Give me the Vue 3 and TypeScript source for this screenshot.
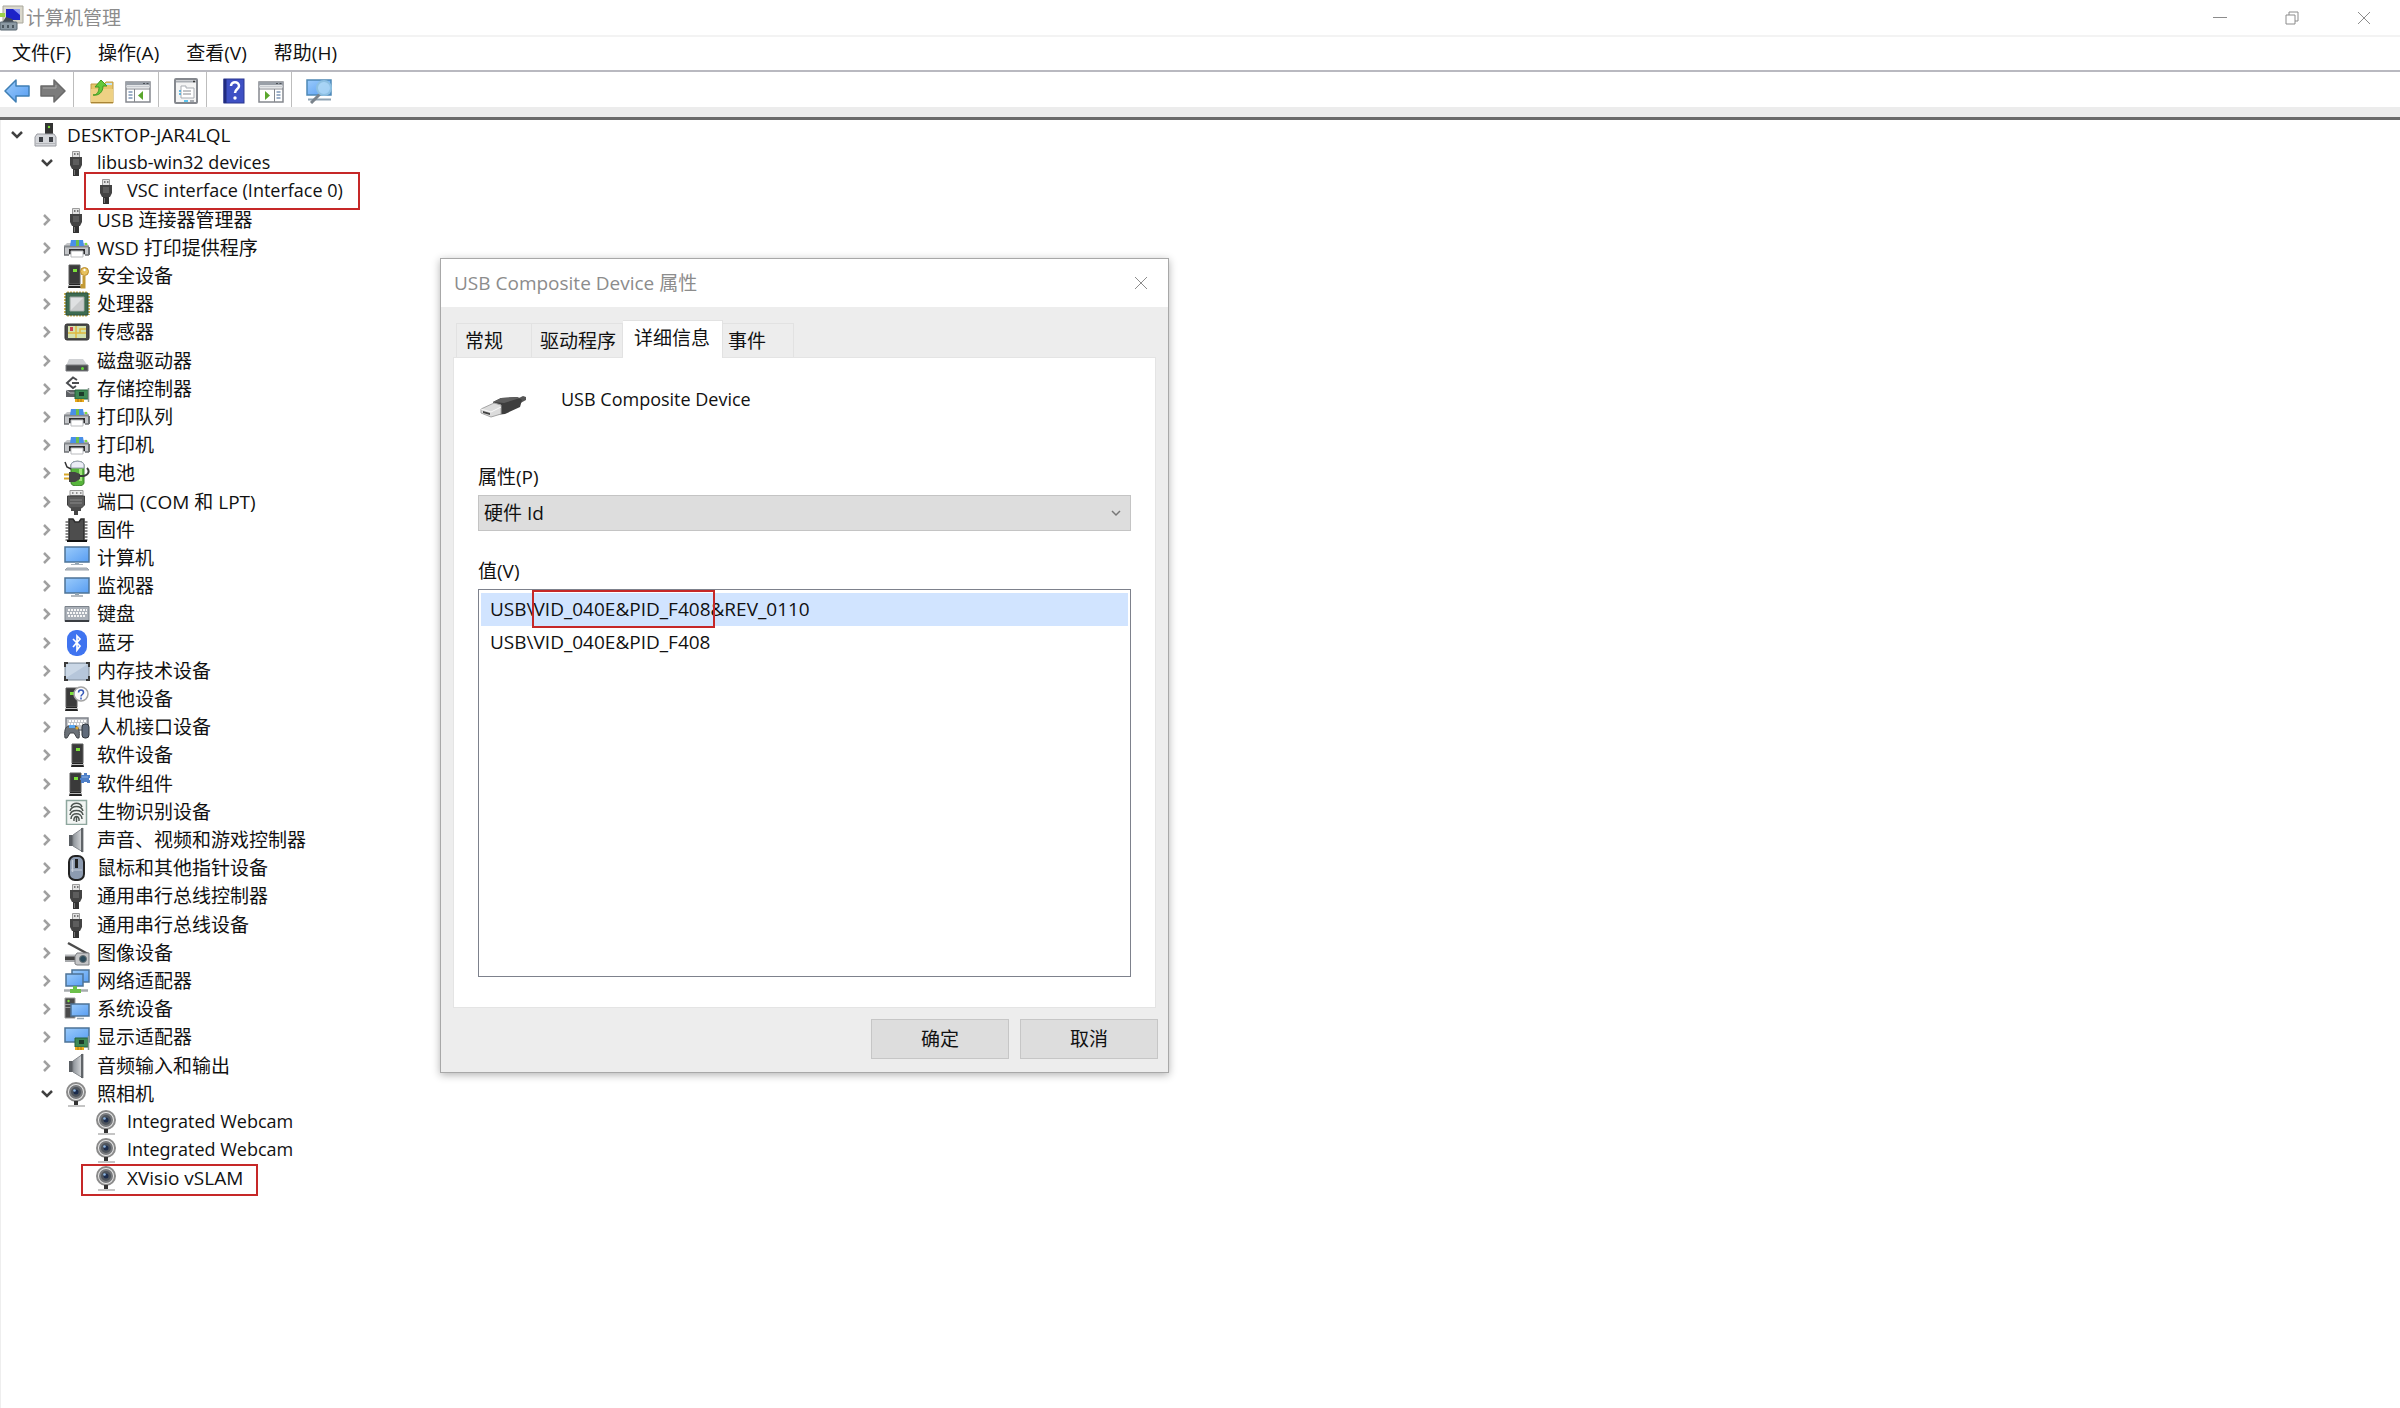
<script setup lang="ts">
import { ref } from 'vue'

interface TreeRow {
  label: string
  icon: string
  level: number
  state?: 'open' | 'closed'
  mark?: string
  compact?: boolean
}

const menus = ['文件(F)', '操作(A)', '查看(V)', '帮助(H)']

const toolGroups = [
  [
    { icon: 'back', name: '后退' },
    { icon: 'forward', name: '前进' },
  ],
  [
    { icon: 'folderUp', name: '上移' },
    { icon: 'paneLeft', name: '显示/隐藏控制台树' },
  ],
  [{ icon: 'properties', name: '属性' }],
  [
    { icon: 'help', name: '帮助' },
    { icon: 'paneRight', name: '显示/隐藏操作窗格' },
  ],
  [{ icon: 'scan', name: '扫描检测硬件改动' }],
]

const closed = (label: string, icon: string): TreeRow => ({ label, icon, level: 1, state: 'closed' })

const rows: TreeRow[] = [
  { label: 'DESKTOP-JAR4LQL', icon: 'host', level: 0, state: 'open' },
  { label: 'libusb-win32 devices', icon: 'usb', level: 1, state: 'open', compact: true },
  { label: 'VSC interface (Interface 0)', icon: 'usb', level: 2, mark: 'mark-vsc', compact: true },
  closed('USB 连接器管理器', 'usb'),
  closed('WSD 打印提供程序', 'printer'),
  closed('安全设备', 'security'),
  closed('处理器', 'cpu'),
  closed('传感器', 'sensor'),
  closed('磁盘驱动器', 'disk'),
  closed('存储控制器', 'storage'),
  closed('打印队列', 'printer'),
  closed('打印机', 'printer'),
  closed('电池', 'battery'),
  closed('端口 (COM 和 LPT)', 'port'),
  closed('固件', 'firmware'),
  closed('计算机', 'computer'),
  closed('监视器', 'monitor'),
  closed('键盘', 'keyboard'),
  closed('蓝牙', 'bluetooth'),
  closed('内存技术设备', 'memory'),
  closed('其他设备', 'other'),
  closed('人机接口设备', 'hid'),
  closed('软件设备', 'tower'),
  closed('软件组件', 'component'),
  closed('生物识别设备', 'finger'),
  closed('声音、视频和游戏控制器', 'speaker'),
  closed('鼠标和其他指针设备', 'mouse'),
  closed('通用串行总线控制器', 'usb'),
  closed('通用串行总线设备', 'usb'),
  closed('图像设备', 'scanner'),
  closed('网络适配器', 'network'),
  closed('系统设备', 'system'),
  closed('显示适配器', 'display'),
  closed('音频输入和输出', 'speaker'),
  { label: '照相机', icon: 'camera', level: 1, state: 'open' },
  { label: 'Integrated Webcam', icon: 'camera', level: 2, compact: true },
  { label: 'Integrated Webcam', icon: 'camera', level: 2, compact: true },
  { label: 'XVisio vSLAM', icon: 'camera', level: 2, mark: 'mark-slam' },
]

const tabs = ['常规', '驱动程序', '详细信息', '事件']
const activeTab = ref('详细信息')
const property = ref('硬件 Id')

const board =
  '<path d="M11 14h13v9H11z" fill="#3f8a56" stroke="#24613a"/><path d="M15 16h5v4h-5z" fill="#1c3b2a"/><path d="M24.500 12v14" stroke="#8d9a94" stroke-width="1.500"/><path d="M11 23h9v3h-9z" fill="#e8a91c"/><path d="M14 23v3M17 23v3" stroke="#a8740c"/>'
const screen = (x: number, y: number, w: number, hgt: number) =>
  `<rect x="${x}" y="${y}" width="${w}" height="${hgt}" fill="url(#g-blue)" stroke="#4d7396" stroke-width="1.500"/>`
const towerAt = (x: number) =>
  `<path d="M${x} 2h11v19H${x}z" fill="#3a3a3a" stroke="#5c5c5c"/><path d="M${x} 21h11l1 4H${x - 1}z" fill="#222"/><path d="M${x - 1} 22.500h13" stroke="#bbb"/><rect x="${x + 4}" y="6" width="4" height="3" fill="#7be03a"/>`
const pane = (mirror: boolean) =>
  `<rect x="1" y="4" width="24" height="20" fill="#fff" stroke="#85888e" stroke-width="1.500"/><path d="M1 4h24v3H1z" fill="#9aa0a8"/><path d="M18 5.500h2M21.500 5.500h2" stroke="#4c5157"/><path d="M1 8.500h24" stroke="#c9ccd1" stroke-width="2"/><path d="M1 11h24" stroke="#85888e"/>` +
  (mirror
    ? '<path d="M16.500 11v13" stroke="#85888e"/><path d="M18.500 14h4M18.500 17h4M18.500 20h4" stroke="#7d97b8" stroke-width="1.500"/><path d="M7 13l5 4.500-5 4.500z" fill="#5aa62c"/>'
    : '<path d="M9.500 11v13" stroke="#85888e"/><path d="M3.500 14h4M3.500 17h4M3.500 20h4" stroke="#7d97b8" stroke-width="1.500"/><path d="M18 13l-5 4.500 5 4.500z" fill="#5aa62c"/>')

const icons: Record<string, string> = {
  app: '<path d="M3 1h20v17H3z" fill="#d9d7cb" stroke="#a9a79b"/><path d="M6 4h14v11H6z" fill="#1c22c8"/><path d="M13 4h7v6z" fill="#8b96f2"/><path d="M0 8h5v4H0z" fill="#9bd24a"/><path d="M2 18l4-6 6 2 3 5z" fill="#444b52"/><rect x="0" y="17" width="17" height="8" rx="1" fill="#8b99a3" stroke="#55626c"/><path d="M3 20v3M8 20v3M13 20v3" stroke="#39434b" stroke-width="1.500"/>',
  back: '<path d="M1 13L12 2v6h13v10H12v6z" fill="url(#g-blue)" stroke="#3f7fb5" stroke-width="1.500" stroke-linejoin="round"/>',
  forward: '<path d="M25 13L14 2v6H1v10h13v6z" fill="#7c7c7c" stroke="#6a6a6a" stroke-width="1.500" stroke-linejoin="round"/><path d="M3 10h13V7" fill="none" stroke="#a8a8a8"/>',
  folderUp: '<path d="M3 6h13l2-2h7v21H3z" fill="#e6c46a" stroke="#c09c42"/><path d="M3 11h22v14H3z" fill="#eed184"/><path d="M3 24.500h22" stroke="#a98435"/><path d="M18 5h6v2h-6z" fill="#bfe3f5"/><path d="M5 17c4 0 6-3 6-8H7l6-7 6 6h-4c0 6-4 10-10 9z" fill="#63c93a" stroke="#3f9a22"/>',
  paneLeft: pane(false),
  paneRight: pane(true),
  properties: '<rect x="2" y="1" width="22" height="24" rx="1" fill="#f4f4f4" stroke="#85888e" stroke-width="2"/><path d="M3 3.500h20" stroke="#a9adb3" stroke-width="2"/><path d="M20 3.500h2" stroke="#333" stroke-width="1.500"/><path d="M8 8h5v2h8v10H8z" fill="#fff" stroke="#a9adb3"/><path d="M10 13h8M10 16h8" stroke="#85888e"/><path d="M6 13h2M6 16h2" stroke="#3aa6dd" stroke-width="1.500"/><path d="M11 23h4" stroke="#5cc4ee" stroke-width="2"/><path d="M17 23h4" stroke="#a9adb3" stroke-width="2"/>',
  help: '<rect x="3" y="1" width="20" height="24" fill="#3e50c4" stroke="#2a3690"/><path d="M4 1v24" stroke="#212b80" stroke-width="3"/><path d="M10 8c0-5 8-5 8 0 0 3-4 3-4 7" fill="none" stroke="#fff" stroke-width="2.500"/><circle cx="14" cy="20" r="1.700" fill="#fff"/>',
  scan: '<rect x="1" y="2" width="24" height="15" fill="url(#g-blue)" stroke="#4d88b5" stroke-width="1.500"/><path d="M2 21.500h23" stroke="#8fa3b3" stroke-width="2"/><path d="M14 16l-9 9" stroke="#7a838b" stroke-width="3"/><circle cx="18" cy="10" r="7" fill="#b4dcf5" fill-opacity=".8" stroke="#8dc0e2" stroke-width="2"/>',
  host: '<path d="M11 1h8v12h-8z" fill="#333"/><circle cx="15" cy="5" r="1.200" fill="#7be03a"/><path d="M3 12h17l2 3v9H1v-9z" fill="#d4d6da" stroke="#9a9ca2"/><path d="M5 15h4v5H5zM15 15h4v5h-4z" fill="#3d4046"/><path d="M1 21.500h21" stroke="#b5b7bb"/>',
  usb: '<path d="M8.500 1.500h7v6h-7z" fill="#e2e2e2" stroke="#9b9b9b"/><path d="M10 4h1.500M13 4h1.500" stroke="#555" stroke-width="1.500"/><path d="M6 7h12v8l-2 4H8l-2-4z" fill="#434343"/><path d="M9 9h6v6H9z" fill="#5d5d5d"/><path d="M9 19h6v7H9z" fill="#333"/><path d="M10.500 20v5" stroke="#777"/>',
  printer: '<path d="M3 8h20l2 3v9H0v-9z" fill="#c3c5c8"/><path d="M0 11.500h25" stroke="#85888c" stroke-width="2"/><path d="M7 5h12l1 6H6z" fill="#4a8fe8"/><path d="M12 5h3v6h-3z" fill="#6cc04a"/><path d="M5 14h16v5H5z" fill="#2e2e30"/><path d="M7 16h12v6H7z" fill="#fff" stroke="#b9bbbe"/><circle cx="22" cy="9" r="1.200" fill="#7be03a"/><path d="M0 12v8M25 12v8" stroke="#6f7276" stroke-width="2"/><path d="M0 20h5M21 20h4" stroke="#6f7276" stroke-width="1.500"/>',
  security: `${towerAt(5)}<path d="M20 13v11h-2v-3" fill="none" stroke="#c39a35" stroke-width="3"/><circle cx="20.500" cy="8.500" r="4" fill="#e7c15e" stroke="#b8892a"/><circle cx="20.500" cy="7" r="1.200" fill="#fff"/>`,
  cpu: '<path d="M3 1.500h21M3 24.500h21M1 2v22M25 2v22" stroke="#d2b457" stroke-width="2" stroke-dasharray="2 1"/><path d="M2 2h22v22H2z" fill="#3d6b50" stroke="#2b5140"/><path d="M6 6h14v14H6z" fill="#dfe1e2" stroke="#9aa39e"/><path d="M7 19L19 7v12z" fill="#c9cbcc"/>',
  sensor: '<rect x="1" y="5" width="24" height="16" rx="2" fill="#4b4b4b" stroke="#333"/><path d="M4 7h18v12H4z" fill="#d4e2ae"/><path d="M12 7v12M4 14h18M16 14v-4h6" stroke="#e0b93f" stroke-width="1.500" fill="none"/><path d="M6 8h3v4H6z" fill="#c8404e"/>',
  disk: '<path d="M5 11h14l5 7H2z" fill="#cfd1d4"/><path d="M2 17h22v6H2z" fill="#4a4c4f" stroke="#7b7d80"/><circle cx="18.500" cy="20.500" r="1.500" fill="#63d63a"/>',
  storage: '<path d="M13 4L9 1.500 3 7l6 5 3-2M8 7h7" fill="none" stroke="#4b4d50" stroke-width="2"/><path d="M2 14h10v7H2z" fill="#5d6064"/><path d="M2 14l4 3h6" stroke="#b9bbbe" fill="none"/>' + board,
  battery: '<path d="M7 5c0-5 13-5 13 0v18c0 4-13 4-13 0z" fill="#58b53c" stroke="#3b7c2b"/><path d="M7 5c0-5 13-5 13 0v3H7z" fill="#eceef5" stroke="#9a9db5"/><path d="M15 9h3v12h-3z" fill="#9fe27a"/><path d="M1 2l2 5 4 2" fill="none" stroke="#333" stroke-width="1.500"/><path d="M0 14.500h6M0 18.500h6" stroke="#d9a82a" stroke-width="2"/><path d="M5 12h6l5 2v5l-5 3H5z" fill="#444"/><path d="M15 16c10 1 11-5 8-8" fill="none" stroke="#3b3b3b" stroke-width="2"/>',
  port: '<path d="M6 1.500h13v5H6z" fill="#ececec" stroke="#9b9b9b"/><path d="M8 4h1.500M12 4h1.500M16 4h1.500" stroke="#777" stroke-width="1.500"/><path d="M3.500 7h17v9l-3 3h-11l-3-3z" fill="#5b5b5b" stroke="#3d3d3d"/><path d="M6 11h12M6 14h12" stroke="#8a8a8a"/><path d="M7 19h10v3H7z" fill="#4a4a4a"/><path d="M10 21h4v5h-4z" fill="#444"/>',
  firmware: '<path d="M3 4v20M22 4v20" stroke="#8d8d8d" stroke-width="3" stroke-dasharray="2 1"/><path d="M5 2h4l2 3h4l2-3h3v22H5z" fill="#4d4d4d" stroke="#2c2c2c" stroke-width="1.500"/><path d="M3 24h20" stroke="#111" stroke-width="2"/>',
  computer: screen(1, 2, 24, 15) + '<path d="M11 17h4v2h-4z" fill="#8fa3b3"/><path d="M7 19.500h12" stroke="#a5b1bb"/><path d="M3 23h20l2 2H1z" fill="#b9c0c8" stroke="#9aa2aa"/>',
  monitor: screen(1, 5, 24, 15) + '<path d="M11 20h4v2h-4z" fill="#8fa3b3"/><path d="M7 23h12" stroke="#9aa2aa" stroke-width="1.500"/>',
  keyboard: '<path d="M1 5.500h24v15H1z" fill="#aab0b8" stroke="#7b828a"/><path d="M4 9h19M3 12h20M4 15h18" stroke="#f6f6f6" stroke-width="2" stroke-dasharray="2 1"/><path d="M1 19h24v2H1z" fill="#3a3d42"/>',
  bluetooth: '<rect x="3" y="0" width="20" height="26" rx="9" fill="#3f74f0"/><path d="M9 9l7 7-3 4V6l3 3-7 8" fill="none" stroke="#fff" stroke-width="1.700"/>',
  memory: '<rect x="1" y="5" width="24" height="17" rx="1" fill="#b6c6da" stroke="#7f8b98"/><path d="M2 6h22L2 20z" fill="#cad7e6"/><path d="M1 9V5h3M22 5h3v4M1 18v4h3M22 22h3v-4" fill="none" stroke="#3b3b3b" stroke-width="2"/>',
  other: `${towerAt(2)}<circle cx="17" cy="8" r="7" fill="#fbfbfb" stroke="#a3a3a3" stroke-width="1.500"/><path d="M14.500 6.500c0-3.500 5-3.500 5 0 0 2-2.500 2-2.500 4" fill="none" stroke="#3558b8" stroke-width="1.500"/><path d="M17 11.500v2" stroke="#3558b8" stroke-width="1.500"/>`,
  hid: '<path d="M2 4h22v12H2z" fill="#c4c7cb" stroke="#7f838a" stroke-width="1.500"/><path d="M5 7h17M4 10h18" stroke="#fff" stroke-width="2" stroke-dasharray="2 1"/><path d="M1 24c-1-6 0-12 4-12h6c4 0 5 6 4 12h-2l-3-5H6l-3 5z" fill="#6b7178" stroke="#42464b"/><path d="M5 11h6v3H5z" fill="#5aa7f0"/><circle cx="13" cy="14" r="1.500" fill="#e0a82a"/><rect x="18" y="10" width="7" height="14" rx="3" fill="#5f6a7a" stroke="#2f343b"/>',
  tower: towerAt(8),
  component: towerAt(6) + '<path d="M17 4h3V2h3v2h3v3h-1v2h1v3h-3v-1h-3v1h-3V9h-1V7h1z" fill="#4f80c8"/><path d="M18 6h6" stroke="#8fb4e8"/>',
  finger: '<path d="M2.500 1.500h20v24h-20z" fill="#f2f5f3" stroke="#8ea79e" stroke-width="1.500"/><path d="M7 8c2-5 9-5 11 0M6 12c2-6 11-6 13 0M6 16c1-6 12-6 13 0M7 20c0-7 11-7 11 0M10 22c-1-6 6-6 5 0M12.500 18v5" fill="none" stroke="#4c5450" stroke-width="1.500"/>',
  speaker: '<path d="M5 8h5v11H5z" fill="#5a5e63"/><path d="M9 8l10-7v24L9 19z" fill="url(#g-gray)" stroke="#85898e"/><path d="M18 1v24" stroke="#606468" stroke-width="2"/>',
  mouse: '<rect x="5" y="1" width="15" height="24" rx="6" fill="#8d9bb0" stroke="#222" stroke-width="2"/><path d="M7 15h11" stroke="#c4ccd8"/><path d="M8.500 5v12" stroke="#c4ccd8" stroke-width="1.500"/><path d="M12.500 4v9" stroke="#222" stroke-width="3"/>',
  scanner: '<path d="M4 3l20 11" stroke="#4c4c4c" stroke-width="2.500"/><path d="M1 16h13v4H1z" fill="#444"/><path d="M1 15.500h12" stroke="#b5b7ba" stroke-width="2"/><path d="M1 21h14" stroke="#a7a9ac" stroke-width="2"/><path d="M13 13h12v12H13l-2-1v-8z" fill="#c4c5c7" stroke="#7b7d80"/><circle cx="19" cy="19" r="3.500" fill="#2d4c5c" stroke="#6b7478"/>',
  network: screen(8, 2, 17, 12) + screen(2, 6, 17, 12) + '<path d="M0 22.500h24" stroke="#a7abae" stroke-width="2.500"/><path d="M9 18h4v3h4v4H6v-4h3z" fill="#6cc04a"/>',
  system: '<path d="M1 2h10v20H1z" fill="#4b4b4b" stroke="#999"/><path d="M1 8.500h9M1 11.500h9" stroke="#999"/><circle cx="4.500" cy="5" r="1.200" fill="#7be03a"/>' + screen(7, 8, 18, 12) + '<path d="M13 22.500h7" stroke="#9aa8b3" stroke-width="1.500"/>',
  display: screen(1, 4, 24, 14) + board,
  camera: '<circle cx="12" cy="11" r="9" fill="#e8e8e8" stroke="#8b8b8b" stroke-width="2"/><circle cx="12" cy="11" r="6" fill="#4e545c" stroke="#77797c" stroke-width="2"/><circle cx="12" cy="11" r="2.500" fill="#1c2c4c"/><circle cx="10.500" cy="9.500" r="1.300" fill="#8cb4e0"/><path d="M10 20h4v4h-4z" fill="#333"/><path d="M4 25h17" stroke="#8b8b8b"/>',
}
</script>

<template>
  <div class="window">
    <svg class="defs" width="0" height="0" aria-hidden="true">
      <defs>
        <linearGradient id="g-blue" x1="0" y1="0" x2="1" y2="1">
          <stop offset="0" stop-color="#9acbfb" />
          <stop offset="1" stop-color="#589df2" />
        </linearGradient>
        <linearGradient id="g-gray">
          <stop offset="0" stop-color="#8d9298" />
          <stop offset="1" stop-color="#dfe1e3" />
        </linearGradient>
      </defs>
    </svg>

    <header class="titlebar">
      <svg class="icon" viewBox="0 0 26 26" v-html="icons.app" />
      <h1>计算机管理</h1>
      <div class="controls">
        <button type="button" aria-label="最小化">
          <svg viewBox="0 0 14 14"><path d="M0 6.500h14" /></svg>
        </button>
        <button type="button" aria-label="还原">
          <svg viewBox="0 0 14 14"><path d="M1 4h9v9H1zM4 4V1h9v9h-3" /></svg>
        </button>
        <button type="button" aria-label="关闭">
          <svg viewBox="0 0 14 14"><path d="M1 1l12 12M13 1L1 13" /></svg>
        </button>
      </div>
    </header>

    <nav class="menubar">
      <button v-for="m in menus" :key="m" type="button">{{ m }}</button>
    </nav>

    <div class="toolbar" role="toolbar">
      <div v-for="(group, i) in toolGroups" :key="i" class="tool-group">
        <button v-for="tool in group" :key="tool.icon" type="button" :aria-label="tool.name">
          <svg class="icon" viewBox="0 0 26 26" v-html="icons[tool.icon]" />
        </button>
      </div>
    </div>
    <div class="band"></div>

    <main class="content">
      <ul class="tree" role="tree">
        <li
          v-for="(row, i) in rows"
          :key="i"
          role="treeitem"
          :aria-level="row.level + 1"
          :aria-expanded="row.state ? row.state === 'open' : undefined"
          :class="['row', `level-${row.level}`, row.mark]"
        >
          <span class="twist">
            <svg v-if="row.state === 'open'" viewBox="0 0 14 14"><path d="M2 4l5 5 5-5" stroke="#404040" /></svg>
            <svg v-else-if="row.state === 'closed'" viewBox="0 0 14 14"><path d="M4 2l5 5-5 5" stroke="#a0a0a0" /></svg>
          </span>
          <svg class="icon" viewBox="0 0 26 26" v-html="icons[row.icon]" />
          <span :class="['name', { compact: row.compact }]">{{ row.label }}</span>
        </li>
      </ul>
    </main>

    <section class="dialog" role="dialog" aria-labelledby="dialog-title">
      <header class="dialog-head">
        <h2 id="dialog-title">USB Composite Device 属性</h2>
        <button type="button" aria-label="关闭">
          <svg viewBox="0 0 14 14"><path d="M1 1l12 12M13 1L1 13" /></svg>
        </button>
      </header>
      <div class="dialog-body">
        <div class="tabs" role="tablist">
          <button
            v-for="tab in tabs"
            :key="tab"
            type="button"
            role="tab"
            :aria-selected="tab === activeTab"
            :class="{ active: tab === activeTab }"
            @click="activeTab = tab"
          >{{ tab }}</button>
        </div>
        <div class="panel" role="tabpanel">
          <div class="device">
            <svg viewBox="0 0 48 24">
              <path d="M36 5l8-4 3 1v3l-9 5z" fill="#555" />
              <path d="M14 7l8-4 16-1 5 3-2 7-15 7-9 1z" fill="#3d3d3d" />
              <path d="M14 7l8-4 16-1 3 1-16 5z" fill="#5e5e5e" />
              <path d="M2 14l13-6 7 2v9l-10 3-10-4z" fill="#dcdcdc" stroke="#a5a5a5" />
              <path d="M2 14l10 3 10-5" fill="none" stroke="#f8f8f8" />
              <path d="M4 16l7 2v2l-7-2z" fill="#444" />
            </svg>
            <p class="compact">USB Composite Device</p>
          </div>
          <label for="property">属性(P)</label>
          <div class="combo">
            <select id="property" v-model="property">
              <option>硬件 Id</option>
            </select>
            <svg viewBox="0 0 14 14"><path d="M3 5l4 4 4-4" /></svg>
          </div>
          <label id="value-label">值(V)</label>
          <ul class="values" role="listbox" aria-labelledby="value-label">
            <li role="option" aria-selected="true">USB\<span class="boxed">VID_040E&amp;PID_F408</span>&amp;REV_0110</li>
            <li role="option" aria-selected="false">USB\VID_040E&amp;PID_F408</li>
          </ul>
        </div>
        <footer>
          <button type="button">确定</button>
          <button type="button">取消</button>
        </footer>
      </div>
    </section>
  </div>
</template>

<style>
body {
  background: #fff;
}
</style>

<style scoped>
.window {
  position: relative;
  display: flex;
  flex-direction: column;
  min-height: 100vh;
  color: #111;
  font: 19px/28px 'Open Sans', 'Noto Sans CJK SC', sans-serif;
  font-feature-settings: 'ss02';
}
.defs {
  position: absolute;
}
h1,
h2,
p,
ul {
  margin: 0;
  padding: 0;
  font-size: inherit;
  font-weight: 400;
  list-style: none;
}
button {
  margin: 0;
  padding: 0;
  border: 0;
  background: none;
  color: inherit;
  font: inherit;
  font-feature-settings: inherit;
}
svg {
  display: block;
  flex: none;
}
.icon {
  width: 26px;
  height: 26px;
}
.compact {
  font-size: 18px;
}

.titlebar {
  display: flex;
  align-items: center;
  height: 35px;
  border-bottom: 2px solid #f3f3f3;
}
.titlebar h1 {
  flex: 1;
  color: #8c8c8c;
}
.controls {
  display: flex;
  align-self: stretch;
}
.controls button {
  display: grid;
  place-items: center;
  width: 72px;
}
.controls svg,
.dialog-head svg {
  width: 14px;
  height: 14px;
  fill: none;
  stroke: #8c8c8c;
}

.menubar {
  display: flex;
  align-items: flex-start;
  gap: 27px;
  height: 33px;
  padding-left: 12px;
  border-bottom: 2px solid #b9b9c0;
}
.menubar button {
  line-height: 32px;
}

.toolbar {
  display: flex;
  height: 35px;
  padding-left: 4px;
}
.tool-group {
  display: flex;
  align-items: center;
  gap: 11px;
  padding: 2px 7px 0 14px;
  border-right: 1px solid #bdbdbd;
}
.tool-group:first-child {
  gap: 10px;
  padding-left: 0;
}
.tool-group:last-child {
  border: 0;
}
.band {
  height: 10px;
  background: #ececec;
  border-bottom: 3px solid #6a6a6a;
}

.content {
  flex: 1;
  padding-top: 1px;
  border-left: 1px solid #eee;
}
.row {
  position: relative;
  display: flex;
  align-items: center;
  height: 28px;
}
/* One spare pixel for every five rows keeps the long list's pitch. */
.row:nth-child(5n + 3) {
  margin-bottom: 1px;
}
.level-0 {
  padding-left: 3px;
}
.level-1 {
  padding-left: 33px;
}
.level-2 {
  padding-left: 63px;
}
.twist {
  display: grid;
  place-items: center;
  width: 26px;
  margin-right: 4px;
}
.twist svg {
  width: 14px;
  height: 14px;
  fill: none;
  stroke-width: 2.5px;
}
.name {
  margin-left: 7px;
  white-space: nowrap;
}
.row .compact {
  padding-bottom: 2px;
}
.mark-vsc::after,
.mark-slam::after,
.boxed::after {
  content: '';
  position: absolute;
  box-sizing: border-box;
  border: 2px solid #c62828;
}
.mark-vsc::after {
  top: -5px;
  left: 83px;
  width: 276px;
  height: 38px;
}
.mark-slam::after {
  top: 0;
  left: 80px;
  width: 177px;
  height: 32px;
}

.dialog {
  position: absolute;
  top: 258px;
  left: 440px;
  box-sizing: border-box;
  width: 729px;
  border: 1px solid #a8a8a8;
  background: #ededed;
  box-shadow: 0 2px 8px rgba(0, 0, 0, 0.3);
}
.dialog-head {
  display: flex;
  height: 48px;
  padding-left: 13px;
  background: #fff;
  color: #8c8c8c;
}
.dialog-head h2 {
  flex: 1;
  line-height: 48px;
}
.dialog-head button {
  display: grid;
  place-items: center;
  width: 54px;
}
.dialog-body {
  padding: 13px 12px 13px;
}
.tabs {
  display: flex;
  align-items: flex-end;
  padding-left: 3px;
}
.tabs button {
  box-sizing: border-box;
  height: 34px;
  padding: 0 0 0 8px;
  border: 1px solid #e2e2e2;
  border-width: 1px 1px 0 0;
  text-align: left;
}
.tabs button:nth-child(1) {
  width: 76px;
  border-left-width: 1px;
}
.tabs button:nth-child(2) {
  width: 91px;
}
.tabs button.active {
  position: relative;
  width: 100px;
  height: 38px;
  margin-bottom: -1px;
  padding: 0 0 4px 11px;
  background: #fff;
}
.tabs button:nth-child(4) {
  width: 71px;
  padding-left: 5px;
}
.panel {
  padding: 26px 24px 30px 24px;
  border: 1px solid #e4e4e4;
  background: #fff;
}
.device {
  display: flex;
  height: 79px;
}
.device svg {
  width: 48px;
  height: 24px;
  margin: 11px 34px 0 1px;
}
.device p {
  line-height: 30px;
}
.panel label {
  display: block;
  height: 32px;
}
.combo {
  position: relative;
  margin-bottom: 26px;
}
.combo select {
  display: block;
  box-sizing: border-box;
  width: 100%;
  height: 36px;
  padding: 0 5px;
  border: 1px solid #c4c4c4;
  border-radius: 0;
  background: #ddd;
  color: inherit;
  font: inherit;
  font-feature-settings: inherit;
  appearance: none;
}
.combo svg {
  position: absolute;
  top: 11px;
  right: 8px;
  width: 14px;
  height: 14px;
  fill: none;
  stroke: #777;
  stroke-width: 1.5px;
  pointer-events: none;
}
.values {
  box-sizing: border-box;
  height: 388px;
  padding: 3px 2px;
  border: 1px solid #7d818c;
}
.values li {
  padding-left: 9px;
  line-height: 33px;
}
.values li[aria-selected='true'] {
  background: #d1e4ff;
}
.boxed {
  position: relative;
}
.boxed::after {
  top: -6px;
  right: -4px;
  bottom: -6px;
  left: -2px;
}
footer {
  display: flex;
  justify-content: flex-end;
  gap: 11px;
  margin: 11px -2px 0 0;
}
footer button {
  box-sizing: border-box;
  width: 138px;
  height: 40px;
  border: 1px solid #c6c6c6;
  background: #ddd;
}
</style>
